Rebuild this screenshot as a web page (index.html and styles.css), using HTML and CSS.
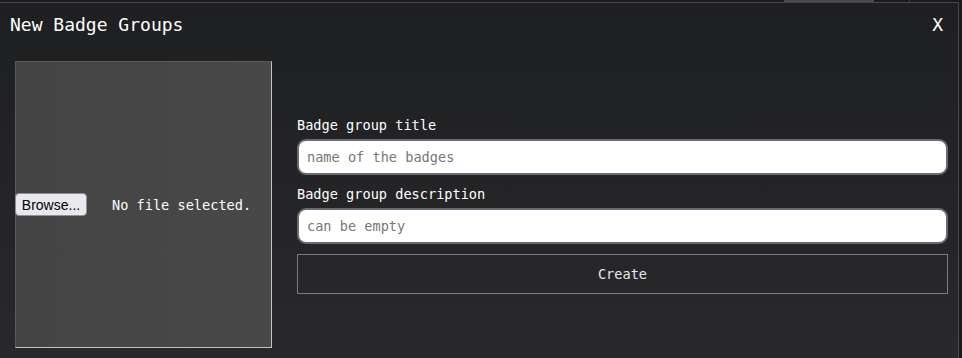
FILE: index.html
```html
<!DOCTYPE html>
<html lang="en">
<head>
<meta charset="utf-8">
<title>New Badge Groups</title>
<link rel="stylesheet" href="styles.css">
</head>
<body>
<div class="topstrip">
  <span class="strip-fill"></span>
  <span class="strip-tab"></span>
  <span class="strip-gap"></span>
  <span class="strip-sep"></span>
</div>
<div class="modal">
  <div class="modal-header">
    <h1 class="modal-title">New Badge Groups</h1>
    <span class="modal-close">X</span>
  </div>
  <div class="modal-body">
    <div class="file-box">
      <span class="browse-btn">Browse...</span>
      <span class="file-status">No file selected.</span>
    </div>
    <form class="form-col">
      <label class="field-label" for="title">Badge group title</label>
      <input class="field-input" id="title" type="text" placeholder="name of the badges">
      <label class="field-label second" for="desc">Badge group description</label>
      <input class="field-input" id="desc" type="text" placeholder="can be empty">
      <button class="create-btn" type="button">Create</button>
    </form>
  </div>
</div>
</body>
</html>
```
FILE: styles.css
```css
* { box-sizing: border-box; }
html, body { margin: 0; padding: 0; }
body {
  width: 962px;
  height: 358px;
  overflow: hidden;
  background: #1c1c1f;
  font-family: "DejaVu Sans Mono", "Liberation Mono", monospace;
  color: #fff;
}
.topstrip {
  display: flex;
  height: 2px;
}
.strip-fill { width: 784px; }
.strip-tab { width: 90px; background: #4a4a4c; }
.strip-gap { width: 35px; }
.strip-sep { width: 1px; background: #3c3a44; }
.modal {
  width: 959px;
  height: 356px;
  border-top: 1px solid #48435a;
  border-right: 1px solid #48435a;
  background: linear-gradient(#1e1f21, #29292b);
  display: flex;
  flex-direction: column;
}
.modal-header {
  display: flex;
  justify-content: space-between;
  align-items: center;
  padding: 10px 15px 10px 10px;
  height: 44px;
}
.modal-title {
  margin: 0;
  font-size: 18px;
  font-weight: normal;
  line-height: 24px;
  color: #fff;
}
.modal-close {
  font-size: 18px;
  line-height: 24px;
  color: #fff;
}
.modal-body {
  display: flex;
  align-items: center;
  gap: 25px;
  padding: 14px 10px 10px 15px;
  flex: 1;
}
.file-box {
  width: 257px;
  height: 287px;
  flex: none;
  background: linear-gradient(90deg, #444 0%, #484848 100%);
  border-top: 1px solid #5a5a5a;
  border-left: 1px solid #5a5a5a;
  border-right: 1px solid #c2c2c2;
  border-bottom: 1px solid #c2c2c2;
  display: flex;
  align-items: center;
}
.browse-btn {
  margin-left: -1px;
  width: 72px;
  height: 23px;
  display: flex;
  align-items: center;
  justify-content: center;
  background: #e9e9ed;
  border: 1px solid #8f8f9d;
  border-radius: 4px;
  color: #000;
  font-family: "Liberation Sans", Arial, sans-serif;
  font-size: 14px;
}
.file-status {
  margin-left: 25px;
  font-size: 13.6px;
  color: #fff;
}
.form-col {
  flex: 1;
  display: flex;
  flex-direction: column;
  margin: 0;
}
.field-label {
  font-size: 13.6px;
  line-height: 20px;
  margin-bottom: 4px;
  color: #fff;
}
.field-label.second { margin-top: 9px; }
.field-input {
  height: 36px;
  width: 100%;
  border: 2px solid #6c6976;
  border-radius: 9px;
  background: #fff;
  padding: 0 8px;
  font-family: "DejaVu Sans Mono", "Liberation Mono", monospace;
  font-size: 13.6px;
  color: #222;
  outline: none;
}
.field-input::placeholder { color: #777; }
.create-btn {
  margin-top: 10px;
  height: 40px;
  width: 100%;
  background: transparent;
  border: 1px solid #7c7c7c;
  color: #e8e8e8;
  font-family: "DejaVu Sans Mono", "Liberation Mono", monospace;
  font-size: 13.6px;
  padding: 0;
}
```
